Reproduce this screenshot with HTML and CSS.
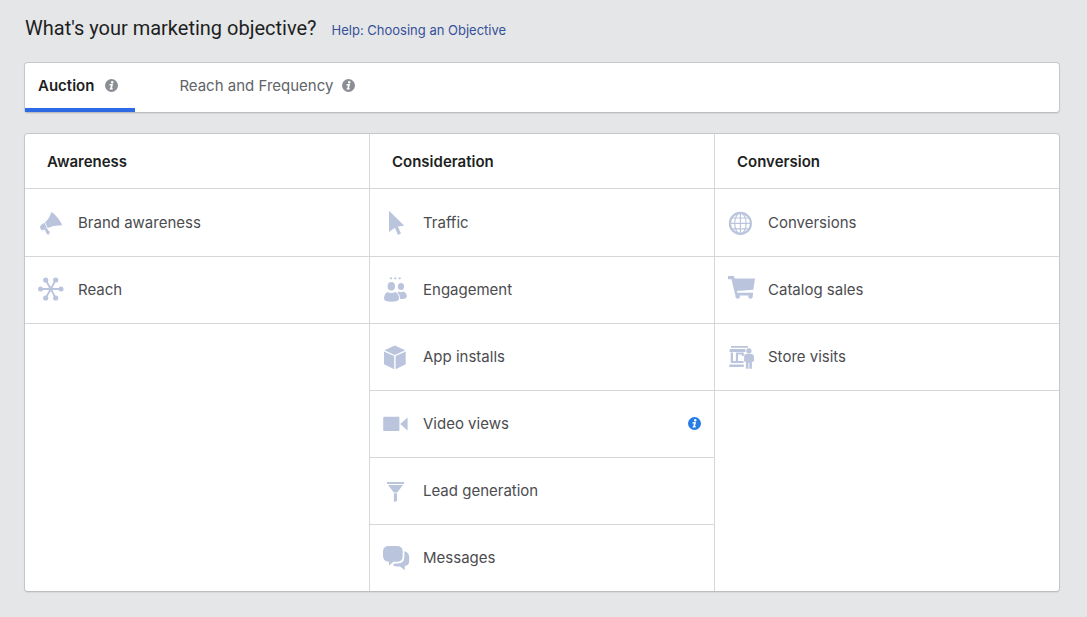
FILE: index.html
```html
<!DOCTYPE html>
<html lang="en">
<head>
<meta charset="utf-8">
<meta name="viewport" content="width=device-width, initial-scale=1">
<title>Marketing objective</title>
<link rel="stylesheet" href="styles.css">
</head>
<body>
<svg class="defs" aria-hidden="true">
  <symbol id="info" viewBox="0 0 13 13">
    <circle cx="6.5" cy="6.5" r="6.5" fill="currentColor"/>
    <circle cx="7.2" cy="3.3" r="1.2" fill="#fff"/>
    <path d="M4.700 5.100h3.300l-1 4.200h.9l-.3 1.300H4.500l.3-1.300h.5l.6-2.900h-1.500z" fill="#fff"/>
  </symbol>
</svg>
<main class="page">
  <header class="page-header">
    <h1 class="title">What's your marketing objective?</h1>
    <a class="help" href="#">Help: Choosing an Objective</a>
  </header>

  <div class="panel tabs" role="tablist">
    <button class="tab tab-active" role="tab" aria-selected="true">Auction <svg class="info"><use href="#info"/></svg></button>
    <button class="tab" role="tab" aria-selected="false">Reach and Frequency <svg class="info"><use href="#info"/></svg></button>
  </div>

  <div class="panel columns">
    <section class="column">
      <h2 class="column-title">Awareness</h2>
      <button class="item">
        <svg class="icon" viewBox="0 0 28 28"><path d="M14.200 3.400Q15 3 15.700 3.700Q22 9 24.800 15.200Q25 16.300 24 16.600Q17 16.300 10.700 18.900L8 13.300Q12.300 9.700 14.200 3.400zM7.400 13.700L10 19.300L6.500 21Q4.300 21.700 3.300 19.600Q2.400 17.200 4.300 15.700zM7.500 20.500L10.200 19.500L11.300 21.400L12.700 22.500L12.400 25Q10.900 26.200 9.900 24.900z"/></svg>
        Brand awareness
      </button>
      <button class="item">
        <svg class="icon" viewBox="0 0 28 28"><path class="line" d="M3.500 13H24M8.700 4L18.700 22M18.700 4L8.700 22"/><circle cx="3.500" cy="13" r="2.500"/><circle cx="24" cy="13" r="2.500"/><circle cx="8.700" cy="4" r="2.600"/><circle cx="18.700" cy="4" r="2.600"/><circle cx="8.700" cy="22" r="2.600"/><circle cx="18.700" cy="22" r="2.600"/><circle cx="13.700" cy="13" r="2.200"/></svg>
        Reach
      </button>
    </section>

    <section class="column">
      <h2 class="column-title">Consideration</h2>
      <button class="item">
        <svg class="icon" viewBox="0 0 28 28"><path d="M7 1.700L22.300 16.700L15.900 17.400L19 24.500L16 25.900L12.800 18.700L7 22.900z"/></svg>
        Traffic
      </button>
      <button class="item">
        <svg class="icon" viewBox="0 0 28 28"><circle cx="9" cy="2.300" r="1.100"/><circle cx="13.300" cy="2.300" r="1.100"/><circle cx="17.700" cy="2.300" r="1.100"/><ellipse cx="9.300" cy="10.300" rx="3.700" ry="4.300"/><ellipse cx="19" cy="10.500" rx="3.100" ry="3.500"/><path d="M5.500 16Q9.300 18 13.200 16Q16.900 17.500 17.100 22.500Q17 25.700 9.500 25.700Q2 25.700 2 22.500Q2.200 17.500 5.500 16zM15.500 16.200L16.500 15.500Q19 17 21.700 15.500Q24.700 17 24.900 20.500Q24.700 23 18.300 23.100Q18.200 19 15.500 16.200z"/></svg>
        Engagement
      </button>
      <button class="item">
        <svg class="icon" viewBox="0 0 28 28"><path d="M12.800 2.600L23.300 7.200L12.800 11.900L2.400 7.200zM2 8.400L12.200 13V26.200L2 21.200zM23.700 8.400L13.600 13V26.200L23.700 21.200z"/></svg>
        App installs
      </button>
      <button class="item">
        <svg class="icon" viewBox="0 0 28 28"><rect x="1.200" y="6.800" width="16.200" height="14.300" rx="1.200"/><path d="M18.200 14L25.600 7.500V20.500z"/></svg>
        Video views
        <svg class="info info-blue"><use href="#info"/></svg>
      </button>
      <button class="item">
        <svg class="icon" viewBox="0 0 28 28"><path d="M5 5H22V6.900H5zM6 8H21L15.200 15.400H11.800zM11.900 16.200H15V24L11.900 25z"/></svg>
        Lead generation
      </button>
      <button class="item">
        <svg class="icon" viewBox="0 0 28 28"><path d="M7 2H15Q20.700 2 20.700 7.500V12Q20.700 17.800 15 17.800H11.500L7 21.500V17.800Q1 17.500 1 12V7.500Q1 2 7 2zM22.300 7.300Q27.200 8.500 27.200 13V17Q27.200 21.600 22.800 22V26.200L18 22.400H14.500Q11.900 22.200 10.900 21L12.600 19.400H15.500Q22.300 19.200 22.300 12.700z"/></svg>
        Messages
      </button>
    </section>

    <section class="column">
      <h2 class="column-title">Conversion</h2>
      <button class="item">
        <svg class="icon" viewBox="0 0 28 28"><circle class="ring" cx="13.400" cy="14.400" r="10.500"/><path class="thin" d="M13.400 4V25M3 14.400H24M5 9H22M5 19.800H22"/><ellipse class="thin" cx="13.400" cy="14.400" rx="5.700" ry="10.500"/></svg>
        Conversions
      </button>
      <button class="item">
        <svg class="icon" viewBox="0 0 28 28"><path d="M1 0H7L7.700 2.400H28L26.300 13.700L9.900 15.100L10.300 16.700H26V19.500H8.300L4.500 3.200H1z"/><circle cx="10.700" cy="20.500" r="2.200"/><circle cx="23.500" cy="20.500" r="2.200"/></svg>
        Catalog sales
      </button>
      <button class="item">
        <svg class="icon" viewBox="0 0 28 28"><path d="M4 2.900H21V4.800H4zM3 6H18.700Q18 7.300 18.600 8.900H2.300zM3.700 9.500H6V19.500H3.700zM4 18H16.500V20H4zM8.900 10H11V19.500H8.900zM14.800 10H16.800V13H14.800zM8.900 9.500H16.800V11.500H8.900zM2.300 21.600H16.800V23.900H2.300zM19 11H24.600Q26.900 11.200 26.900 13.500V18.800H24.900V25.800H22.300V19.800H21.500V25.800H18.900V18.800H17.100V13.500Q17.100 11 19 11z"/><circle cx="21.900" cy="7.900" r="2.600"/></svg>
        Store visits
      </button>
    </section>
  </div>
</main>
</body>
</html>
```
FILE: styles.css
```css
* { box-sizing: border-box; }

body {
  margin: 0;
  background: #e5e6e8;
  color: #4b4c50;
  font-family: Inter, Roboto, "Liberation Sans", sans-serif;
  font-size: 15px;
  line-height: 20px;
}

button {
  margin: 0;
  border: 0;
  background: none;
  color: inherit;
  font: inherit;
  text-align: left;
  cursor: pointer;
}

.defs { position: absolute; width: 0; height: 0; }

.page { padding: 14px 27px 25px 24px; }

.page-header {
  display: flex;
  align-items: baseline;
  gap: 15px;
  margin-bottom: 20px;
  padding-left: 1px;
}

.title {
  margin: 0;
  color: #1d1f23;
  font-family: Roboto, "Liberation Sans", sans-serif;
  font-size: 20px;
  font-weight: 400;
  line-height: 28px;
}

.help { color: #365099; font-size: 13px; text-decoration: none; }

.panel {
  border: 1px solid #c6c7ca;
  border-bottom-color: #bcbdc0;
  border-radius: 4px;
  background: #fff;
  box-shadow: 0 1px 1px #d6d7d9;
}

.tabs { display: flex; gap: 31px; margin-bottom: 20px; }

.tab {
  display: flex;
  align-items: center;
  gap: 9px;
  padding: 13px 13px 12px;
  border-bottom: 4px solid transparent;
  color: #616469;
}

.tab-active {
  gap: 11px;
  padding-right: 17px;
  border-bottom-color: #2d6ae3;
  color: #1d1f23;
  font-weight: 600;
}

.info { width: 13px; height: 13px; margin-bottom: 1px; color: #8b8e95; }
.info-blue { margin-left: auto; color: #267de8; }

/* The 1px gaps show the panel's own colour as column rules. */
.columns {
  display: grid;
  grid-template-columns: 1fr 1fr 1fr;
  gap: 1px;
  overflow: hidden;
  background: #d6d7d9;
}

.column { background: #fff; }

.column-title {
  margin: 0;
  padding: 18px 22px 16px;
  border-bottom: 1px solid #d6d7d9;
  color: #1d1f23;
  font-size: 15px;
  font-weight: 600;
  line-height: 20px;
}

.item {
  display: flex;
  align-items: center;
  gap: 13px;
  width: 100%;
  height: 67px;
  padding: 0 13px 0 12px;
  border-bottom: 1px solid #d6d7d9;
}

.column-title + .item { height: 68px; }
.column:nth-child(2) .item:last-child { height: 66px; border-bottom: 0; }

.icon { width: 28px; height: 28px; fill: #bac5dd; }
.line, .ring, .thin { fill: none; stroke: #bac5dd; }
.line { stroke-width: 1.8; }
.ring { stroke-width: 2.2; }
.thin { stroke-width: 1.2; }
```
